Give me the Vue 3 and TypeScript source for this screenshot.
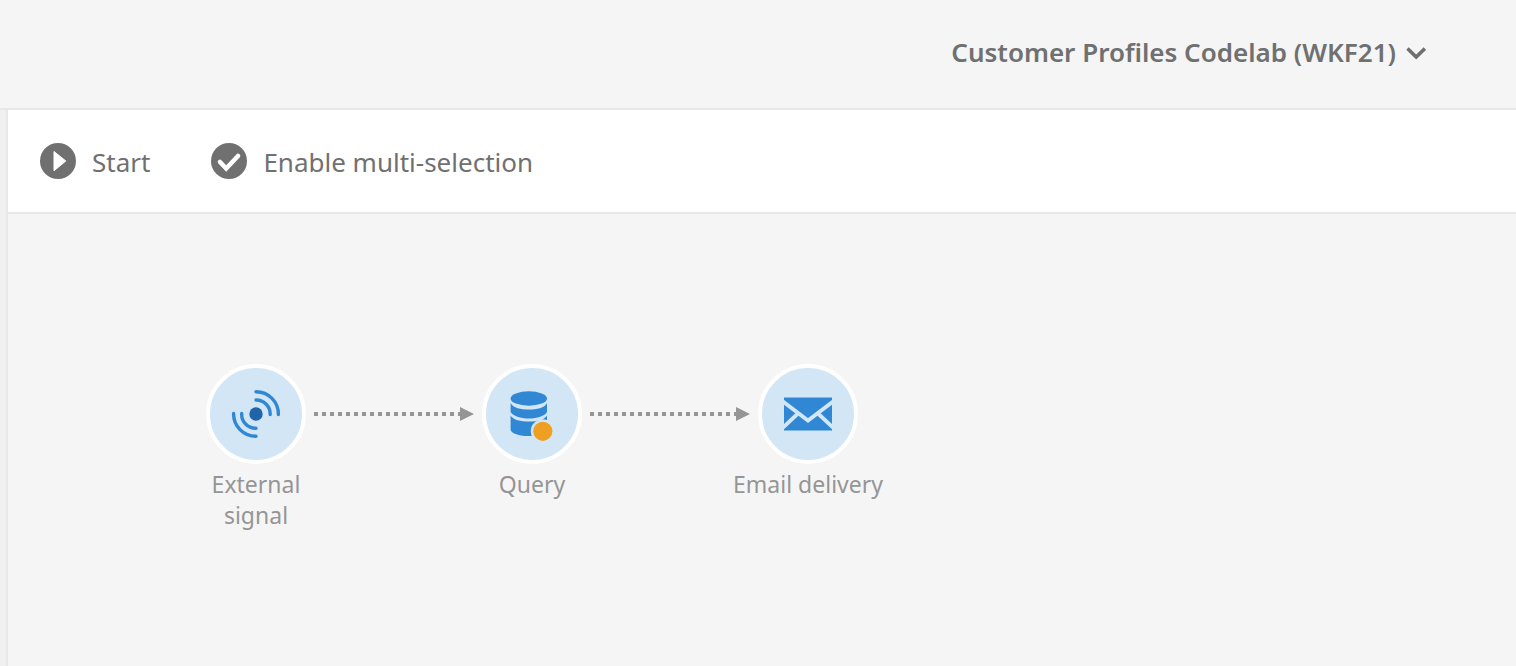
<script setup lang="ts">
type NodeKind = 'signal' | 'query' | 'email'

interface Activity {
  kind: NodeKind
  label: string
}

const title = 'Customer Profiles Codelab (WKF21)'

const activities: Activity[] = [
  { kind: 'signal', label: 'External signal' },
  { kind: 'query', label: 'Query' },
  { kind: 'email', label: 'Email delivery' },
]
</script>

<template>
  <div class="app">
    <header class="header">
      <button class="title" type="button">
        <span>{{ title }}</span>
        <svg width="20" height="16" viewBox="0 0 20 16" aria-hidden="true">
          <path d="M1.500 4.500 L10.200 13 L18.900 4.500" fill="none" stroke="#707070" stroke-width="3.600" />
        </svg>
      </button>
    </header>

    <div class="body">
      <aside class="rail"></aside>
      <main class="main">
        <div class="toolbar">
          <button class="action" type="button">
            <svg width="36" height="36" viewBox="0 0 36 36" aria-hidden="true">
              <circle cx="18" cy="18" r="18" fill="#707070" />
              <path d="M14 8.500 L25.800 18 L14 27.800 Z" fill="#fff" stroke="#fff" stroke-width="1" stroke-linejoin="round" />
            </svg>
            <span class="caption">Start</span>
          </button>
          <button class="action" type="button">
            <svg width="36" height="36" viewBox="0 0 36 36" aria-hidden="true">
              <circle cx="18" cy="18" r="18" fill="#707070" />
              <path d="M9 19 L15.200 25.500 L27 13" fill="none" stroke="#fff" stroke-width="4.600" stroke-linecap="round" />
            </svg>
            <span class="caption">Enable multi-selection</span>
          </button>
        </div>

        <ol class="flow">
          <li v-for="(activity, i) in activities" :key="activity.kind" class="node">
            <div class="disc">
              <svg v-if="activity.kind === 'signal'" width="50" height="50" viewBox="-1 -1 50 50" aria-hidden="true">
                <circle cx="24" cy="24" r="6.700" fill="#2064aa" />
                <g fill="none" stroke="#3088d4" stroke-width="3.400" stroke-linecap="round">
                  <path d="M24 1.700 A22.300 22.300 0 0 1 46.400 24.500" />
                  <path d="M24 10 A14 14 0 0 1 38.200 24.500" />
                  <path d="M24 46.300 A22.300 22.300 0 0 1 1.600 23.500" />
                  <path d="M24 38.300 A14 14 0 0 1 9.700 23.500" />
                </g>
              </svg>
              <svg v-else-if="activity.kind === 'query'" width="48" height="56" viewBox="0 -2 48 56" aria-hidden="true">
                <g fill="#3088d4">
                  <ellipse cx="20.800" cy="10.500" rx="18.200" ry="7.200" />
                  <path d="M2.600 15 C5 20 13 21.500 20.800 21.500 S36.600 20 39 15 V24 C37 28 29 30.500 20.800 30.500 S5 28 2.600 24 Z" />
                  <path d="M2.600 27.500 C5 32 13 33.500 20.800 33.500 S36.600 32 39 27.500 V42 C37 46 29 48 20.800 48 S4 46 2.600 42 Z" />
                </g>
                <circle cx="34.800" cy="43.300" r="12" fill="#d3e6f5" />
                <circle cx="34.800" cy="43.300" r="9.600" fill="#f0a020" />
              </svg>
              <svg v-else width="48" height="34" viewBox="0 0 48 34" aria-hidden="true">
                <rect y="0.500" width="48" height="33" fill="#3088d4" />
                <path d="M-1 4.500 L24 23.500 L49 4.500 M-1 30.500 L14.500 16 M49 30.500 L33.500 16" fill="none" stroke="#d3e6f5" stroke-width="3.800" />
              </svg>
            </div>
            <span class="label">{{ activity.label }}</span>
            <svg
              v-if="i < activities.length - 1"
              class="link"
              width="160"
              height="14"
              viewBox="0 0 160 14"
              aria-hidden="true"
            >
              <path d="M0 7 H148" stroke="#959595" stroke-width="4" stroke-dasharray="4 4" />
              <path d="M146 0 L160 7 L146 14 Z" fill="#959595" />
            </svg>
          </li>
        </ol>
      </main>
    </div>
  </div>
</template>

<style>
body {
  margin: 0;
  background: #f5f5f5;
}
</style>

<style scoped>
.app {
  display: flex;
  flex-direction: column;
  min-height: 100vh;
  background: #f5f5f5;
  color: #707070;
  font-family: "Noto Sans", "Open Sans", sans-serif;
}

button {
  display: flex;
  align-items: center;
  margin: 0;
  padding: 0;
  border: 0;
  background: none;
  color: inherit;
  font: inherit;
  cursor: pointer;
}

.header {
  display: flex;
  align-items: center;
  justify-content: flex-end;
  box-sizing: border-box;
  height: 110px;
  padding: 0 90px 4px 0;
  border-bottom: 2px solid #e8e8e8;
}

.title {
  gap: 10px;
  font-size: 26px;
  font-weight: 600;
  line-height: 36px;
  white-space: nowrap;
}

.body {
  display: flex;
  flex: 1;
}

.rail {
  width: 6px;
  border-right: 2px solid #e8e8e8;
  background: #f0f0f0;
}

.main {
  flex: 1;
  min-width: 0;
}

.toolbar {
  display: flex;
  align-items: center;
  gap: 61px;
  height: 102px;
  padding-left: 32px;
  border-bottom: 2px solid #e8e8e8;
  background: #fff;
}

.action {
  gap: 16px;
  font-size: 26px;
  line-height: 36px;
  white-space: nowrap;
}

.caption {
  padding-top: 2px;
}

.flow {
  display: flex;
  gap: 120px;
  margin: 0;
  padding: 150px 0 0 170px;
  list-style: none;
}

.node {
  position: relative;
  display: flex;
  flex-direction: column;
  align-items: center;
  flex: none;
  width: 156px;
}

.disc {
  display: flex;
  align-items: center;
  justify-content: center;
  box-sizing: border-box;
  width: 100px;
  height: 100px;
  border: 4px solid #fff;
  border-radius: 50%;
  background: #d3e6f5;
}

.label {
  margin-top: 5px;
  color: #959595;
  font-size: 23px;
  line-height: 31px;
  text-align: center;
}

.link {
  position: absolute;
  top: 43px;
  left: 136px;
}
</style>
